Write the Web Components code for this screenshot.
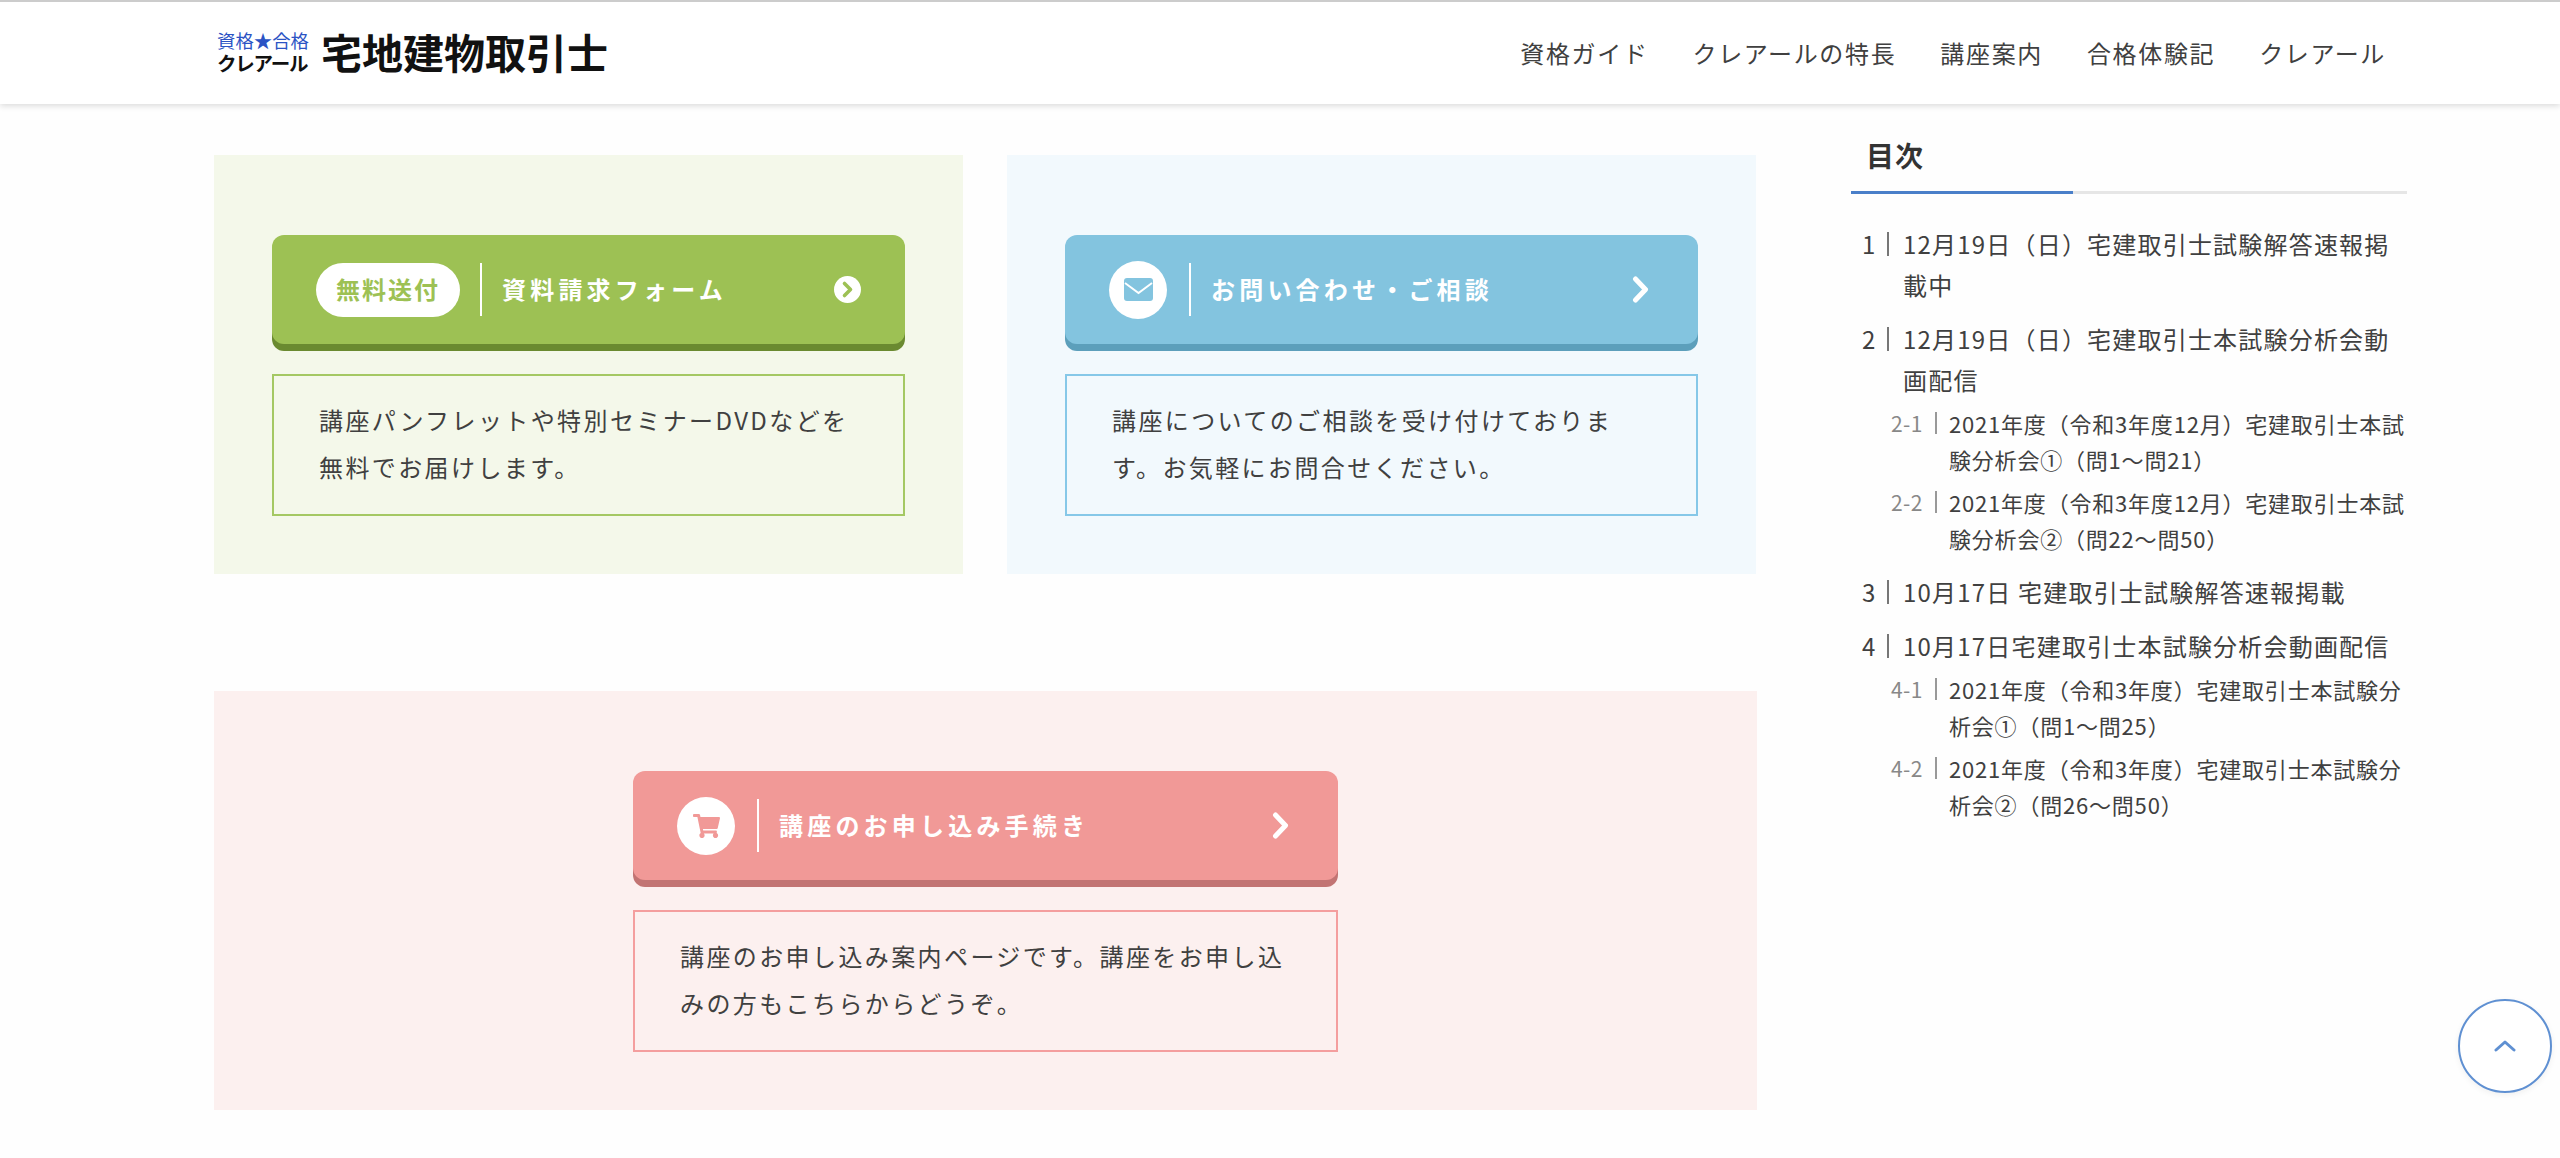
<!DOCTYPE html>
<html lang="ja">
<head>
    <meta charset="UTF-8">
    <title>宅地建物取引士</title>
    <style>
        html, body {
            margin: 0;
            height: 100%;
            overflow: hidden;
            background: #fefefe;
            color: #404040;
            font-family: "Noto Sans CJK JP", "Noto Sans", sans-serif;
        }
        .page {
            display: grid;
            grid-template-columns: 1543px 556px;
            column-gap: 94px;
            padding-left: 214px;
        }
        .main {
            display: flex;
            flex-direction: column;
            gap: 117px;
            padding-top: 51px;
        }
        .pair {
            display: grid;
            grid-template-columns: 749px 749px;
            column-gap: 44px;
        }
    </style>
</head>
<body>
    <site-header>
        <site-link>資格ガイド</site-link>
        <site-link>クレアールの特長</site-link>
        <site-link>講座案内</site-link>
        <site-link>合格体験記</site-link>
        <site-link>クレアール</site-link>
    </site-header>
    <div class="page">
        <div class="main">
            <div class="pair">
                <cta-panel style="--tone:#9dc154;--tone-dark:#6a8a30;--tone-line:#a4c863;--tone-bg:#f4f8ea" chevron="round">
                    <span slot="badge" class="pill" style="display:block;width:144px;height:54px;line-height:51px;border-radius:27px;background:#fff;color:#9dc154;text-align:center;font-size:24px;font-weight:700;letter-spacing:2px">無料送付</span>
                    <span slot="label">資料請求フォーム</span>
                    講座パンフレットや特別セミナーDVDなどを無料でお届けします。
                </cta-panel>
                <cta-panel style="--tone:#83c4df;--tone-dark:#5c9fbb;--tone-line:#86c8e8;--tone-bg:#f2f9fd">
                    <icon-disc slot="badge">
                        <svg width="29" height="23" viewBox="0 0 29 23" style="display:block"><rect width="29" height="23" rx="3" fill="#83c4df"/><path d="M1 5l13.5 10L28 5" fill="none" stroke="#fff" stroke-width="2"/></svg>
                    </icon-disc>
                    <span slot="label">お問い合わせ・ご相談</span>
                    講座についてのご相談を受け付けております。お気軽にお問合せください。
                </cta-panel>
            </div>
            <cta-panel style="--tone:#f19997;--tone-dark:#c27473;--tone-line:#f49e9e;--tone-bg:#fcf0ef;--inner:705px">
                <icon-disc slot="badge">
                    <svg width="27" height="24" viewBox="0 0 576 512" style="display:block"><path fill="#f19997" d="M528.12 301.319l47.273-208C578.806 78.301 567.391 64 551.99 64H159.208l-9.166-44.81C147.758 8.021 137.93 0 126.529 0H24C10.745 0 0 10.745 0 24v16c0 13.255 10.745 24 24 24h69.883l70.248 343.435C147.325 417.1 136 435.222 136 456c0 30.928 25.072 56 56 56s56-25.072 56-56c0-15.674-6.447-29.835-16.824-40h209.647C430.447 426.165 424 440.326 424 456c0 30.928 25.072 56 56 56s56-25.072 56-56c0-22.172-12.888-41.332-31.579-50.405l5.517-24.276c3.413-15.018-8.002-29.319-23.403-29.319H218.117l-6.545-32h293.145c11.206 0 20.92-7.754 23.403-18.681z"/></svg>
                </icon-disc>
                <span slot="label">講座のお申し込み手続き</span>
                講座のお申し込み案内ページです。講座をお申し込みの方もこちらからどうぞ。
            </cta-panel>
        </div>
        <toc-panel>
            <toc-item num="1">12月19日（日）宅建取引士試験解答速報掲載中</toc-item>
            <toc-item num="2">12月19日（日）宅建取引士本試験分析会動画配信
                <toc-item slot="sub" sub num="2-1">2021年度（令和3年度12月）宅建取引士本試験分析会①（問1～問21）</toc-item>
                <toc-item slot="sub" sub num="2-2">2021年度（令和3年度12月）宅建取引士本試験分析会②（問22～問50）</toc-item>
            </toc-item>
            <toc-item num="3">10月17日 宅建取引士試験解答速報掲載</toc-item>
            <toc-item num="4">10月17日宅建取引士本試験分析会動画配信
                <toc-item slot="sub" sub num="4-1">2021年度（令和3年度）宅建取引士本試験分析会①（問1～問25）</toc-item>
                <toc-item slot="sub" sub num="4-2">2021年度（令和3年度）宅建取引士本試験分析会②（問26～問50）</toc-item>
            </toc-item>
        </toc-panel>
    </div>
    <back-top></back-top>
    <script>
        class SiteHeader extends HTMLElement {
            constructor(...args) {
                super(...args)
                this.attachShadow({ mode: 'open' })
                this.shadowRoot.innerHTML = /* HTML */`
                    <style>
                        :host {
                            display: flex;
                            align-items: center;
                            justify-content: space-between;
                            box-sizing: border-box;
                            height: 104px;
                            padding: 0 174px 0 217px;
                            background: #fff;
                            border-top: 2px solid #ccc;
                            box-shadow: 0 2px 6px rgba(0, 0, 0, .14);
                        }
                        .logo {
                            display: flex;
                            align-items: center;
                            gap: 12px;
                            margin-top: -4px;
                        }
                        .stack {
                            display: flex;
                            flex-direction: column;
                            width: 92px;
                            padding-top: 4px;
                            font-family: "Liberation Sans", "Noto Sans CJK JP", sans-serif;
                        }
                        .stack span {
                            display: block;
                            white-space: nowrap;
                            line-height: 22px;
                        }
                        .top {
                            color: #2b53c4;
                            font-size: 18.4px;
                        }
                        .bottom {
                            color: #111;
                            font-size: 19.5px;
                            font-weight: 700;
                            letter-spacing: -1.2px;
                        }
                        .title {
                            color: #111;
                            font-size: 41px;
                            font-weight: 700;
                            line-height: 1;
                            white-space: nowrap;
                        }
                        nav {
                            display: flex;
                            gap: 44px;
                            margin-top: -2px;
                        }
                    </style>
                    <div class="logo">
                        <div class="stack"><span class="top">資格★合格</span><span class="bottom">クレアール</span></div>
                        <div class="title">宅地建物取引士</div>
                    </div>
                    <nav><slot></slot></nav>
                `
            }
        }
        self.customElements.define('site-header', SiteHeader)

        class SiteLink extends HTMLElement {
            constructor(...args) {
                super(...args)
                this.attachShadow({ mode: 'open' })
                this.shadowRoot.innerHTML = /* HTML */`
                    <style>
                        :host {
                            display: block;
                            color: #404040;
                            font-size: 24px;
                            letter-spacing: 1.65px;
                            white-space: nowrap;
                        }
                    </style>
                    <slot></slot>
                `
            }
        }
        self.customElements.define('site-link', SiteLink)

        class IconDisc extends HTMLElement {
            constructor(...args) {
                super(...args)
                this.attachShadow({ mode: 'open' })
                this.shadowRoot.innerHTML = /* HTML */`
                    <style>
                        :host {
                            display: flex;
                            align-items: center;
                            justify-content: center;
                            width: 58px;
                            height: 58px;
                            margin-right: 2px;
                            border-radius: 50%;
                            background: #fff;
                        }
                    </style>
                    <slot></slot>
                `
            }
        }
        self.customElements.define('icon-disc', IconDisc)

        class CtaPanel extends HTMLElement {
            constructor(...args) {
                super(...args)
                this.attachShadow({ mode: 'open' })
                const chevron = this.getAttribute('chevron') === 'round'
                    ? '<circle cx="13.5" cy="13.5" r="13.5" fill="#fff"/><path d="M10.5 7.5l6 6-6 6" fill="none" stroke="var(--tone)" stroke-width="3.6" stroke-linecap="round" stroke-linejoin="round"/>'
                    : '<path d="M8.5 3l10 10.5-10 10.5" fill="none" stroke="#fff" stroke-width="5" stroke-linecap="round" stroke-linejoin="round"/>'
                this.shadowRoot.innerHTML = /* HTML */`
                    <style>
                        :host {
                            display: block;
                            padding: 80px 58px 58px;
                            background: var(--tone-bg);
                        }
                        .inner {
                            width: var(--inner, 100%);
                            margin: 0 auto;
                        }
                        .button {
                            display: flex;
                            align-items: center;
                            box-sizing: border-box;
                            height: 109px;
                            padding: 0 44px;
                            border-radius: 12px;
                            background: var(--tone);
                            box-shadow: 0 7px 0 var(--tone-dark);
                            color: #fff;
                        }
                        .divider {
                            flex: none;
                            width: 2px;
                            height: 53px;
                            margin: 0 20px;
                            background: #fff;
                        }
                        .label {
                            flex: 1;
                            margin-top: -3px;
                            font-size: 24px;
                            font-weight: 700;
                            letter-spacing: 4.2px;
                            white-space: nowrap;
                        }
                        svg {
                            display: block;
                            flex: none;
                        }
                        .note {
                            box-sizing: border-box;
                            margin-top: 30px;
                            padding: 20px 45px 24px;
                            border: 2px solid var(--tone-line);
                            color: #404040;
                            font-size: 24px;
                            line-height: 47px;
                            letter-spacing: 2.4px;
                        }
                    </style>
                    <div class="inner">
                        <div class="button">
                            <slot name="badge"></slot>
                            <span class="divider"></span>
                            <span class="label"><slot name="label"></slot></span>
                            <svg width="27" height="27" viewBox="0 0 27 27">${chevron}</svg>
                        </div>
                        <div class="note"><slot></slot></div>
                    </div>
                `
            }
        }
        self.customElements.define('cta-panel', CtaPanel)

        class TocPanel extends HTMLElement {
            constructor(...args) {
                super(...args)
                this.attachShadow({ mode: 'open' })
                this.shadowRoot.innerHTML = /* HTML */`
                    <style>
                        :host {
                            display: block;
                        }
                        h2 {
                            margin: 0;
                            padding: 29px 0 0 15px;
                            height: 58px;
                            color: #333;
                            font-size: 28px;
                            font-weight: 700;
                            line-height: 44px;
                            letter-spacing: 1px;
                            border-bottom: 3px solid #e6e6e6;
                            position: relative;
                        }
                        h2::after {
                            content: "";
                            position: absolute;
                            left: 0;
                            bottom: -3px;
                            width: 222px;
                            height: 3px;
                            background: #4a7fc9;
                        }
                        .list {
                            display: flex;
                            flex-direction: column;
                            gap: 13px;
                            padding: 29px 0 0 11px;
                        }
                    </style>
                    <h2>目次</h2>
                    <div class="list"><slot></slot></div>
                `
            }
        }
        self.customElements.define('toc-panel', TocPanel)

        class TocItem extends HTMLElement {
            constructor(...args) {
                super(...args)
                this.attachShadow({ mode: 'open' })
                this.shadowRoot.innerHTML = /* HTML */`
                    <style>
                        :host {
                            display: block;
                        }
                        .row {
                            display: grid;
                            grid-template-columns: 41px 1fr;
                            font-size: 24px;
                            line-height: 41px;
                            letter-spacing: 1.2px;
                        }
                        .num {
                            position: relative;
                        }
                        .num::after {
                            content: "";
                            position: absolute;
                            left: 25px;
                            top: 9px;
                            width: 2px;
                            height: 24px;
                            background: #777;
                        }
                        .subs {
                            display: flex;
                            flex-direction: column;
                            gap: 7px;
                        }
                        ::slotted(toc-item:first-of-type) {
                            margin-top: 5px;
                        }
                        ::slotted(toc-item:last-of-type) {
                            margin-bottom: 2px;
                        }
                        :host([sub]) .row {
                            grid-template-columns: 58px 1fr;
                            padding-left: 29px;
                            font-size: 22px;
                            line-height: 36px;
                            letter-spacing: .8px;
                        }
                        :host([sub]) .num {
                            color: #888;
                            font-size: 21px;
                            letter-spacing: .4px;
                        }
                        :host([sub]) .num::after {
                            left: 44px;
                            top: 7px;
                            height: 22px;
                            background: #999;
                        }
                    </style>
                    <div class="row">
                        <span class="num">${this.getAttribute('num')}</span>
                        <span class="text"><slot></slot></span>
                    </div>
                    <div class="subs"><slot name="sub"></slot></div>
                `
            }
        }
        self.customElements.define('toc-item', TocItem)

        class BackTop extends HTMLElement {
            constructor(...args) {
                super(...args)
                this.attachShadow({ mode: 'open' })
                this.shadowRoot.innerHTML = /* HTML */`
                    <style>
                        :host {
                            position: fixed;
                            left: 2458px;
                            top: 999px;
                            display: flex;
                            align-items: center;
                            justify-content: center;
                            box-sizing: border-box;
                            width: 94px;
                            height: 94px;
                            border: 2px solid #5f90d2;
                            border-radius: 50%;
                            background: #fff;
                            box-shadow: 0 2px 6px rgba(0, 0, 0, .06);
                        }
                    </style>
                    <svg width="22" height="14" viewBox="0 0 22 14"><path d="M2 11l9-8 9 8" fill="none" stroke="#5f90d2" stroke-width="3" stroke-linecap="round" stroke-linejoin="round"/></svg>
                `
            }
        }
        self.customElements.define('back-top', BackTop)
    </script>
</body>
</html>
